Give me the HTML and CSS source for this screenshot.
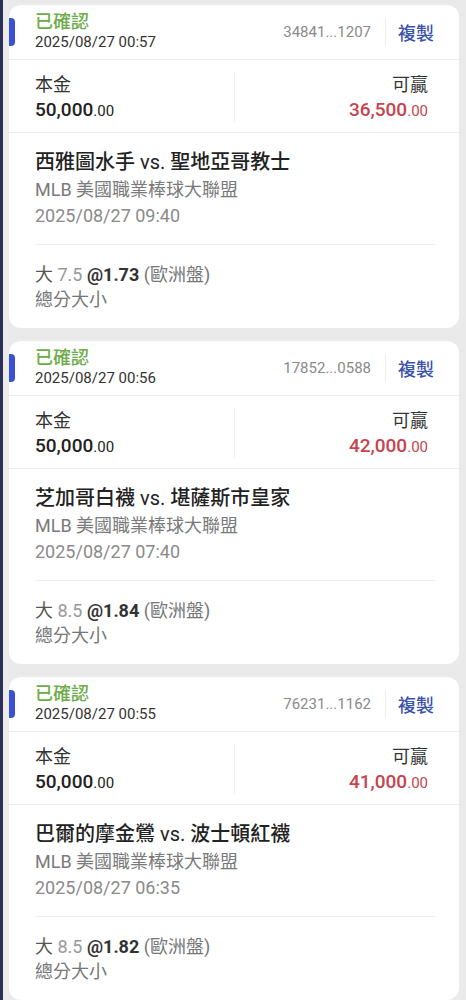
FILE: index.html
```html
<!DOCTYPE html>
<html lang="zh-Hant">
<head>
  <meta charset="UTF-8">
  <title>注單紀錄</title>
  <link rel="stylesheet" href="styles.css">
</head>
<body>
  <div class="page">

    <div class="card">
      <div class="card-head">
        <span class="marker"></span>
        <div class="status">
          <div class="status-text">已確認</div>
          <div class="status-time">2025/08/27 00:57</div>
        </div>
        <span class="order-no">34841...1207</span>
        <a class="copy">複製</a>
      </div>
      <div class="money">
        <div class="money-col">
          <div class="money-label">本金</div>
          <div class="amt">50,000<small>.00</small></div>
        </div>
        <div class="money-col right">
          <div class="money-label">可贏</div>
          <div class="amt win">36,500<small>.00</small></div>
        </div>
      </div>
      <div class="match">
        <div class="match-inner">
          <div class="teams">西雅圖水手 <span class="vs">vs.</span> 聖地亞哥教士</div>
          <div class="league">MLB 美國職業棒球大聯盟</div>
          <div class="kickoff">2025/08/27 09:40</div>
        </div>
      </div>
      <div class="bet">
        <div class="pick"><span class="side">大</span> <span class="line">7.5</span> <b>@1.73</b> <span class="type">(歐洲盤)</span></div>
        <div class="market">總分大小</div>
      </div>
    </div>

    <div class="card">
      <div class="card-head">
        <span class="marker"></span>
        <div class="status">
          <div class="status-text">已確認</div>
          <div class="status-time">2025/08/27 00:56</div>
        </div>
        <span class="order-no">17852...0588</span>
        <a class="copy">複製</a>
      </div>
      <div class="money">
        <div class="money-col">
          <div class="money-label">本金</div>
          <div class="amt">50,000<small>.00</small></div>
        </div>
        <div class="money-col right">
          <div class="money-label">可贏</div>
          <div class="amt win">42,000<small>.00</small></div>
        </div>
      </div>
      <div class="match">
        <div class="match-inner">
          <div class="teams">芝加哥白襪 <span class="vs">vs.</span> 堪薩斯市皇家</div>
          <div class="league">MLB 美國職業棒球大聯盟</div>
          <div class="kickoff">2025/08/27 07:40</div>
        </div>
      </div>
      <div class="bet">
        <div class="pick"><span class="side">大</span> <span class="line">8.5</span> <b>@1.84</b> <span class="type">(歐洲盤)</span></div>
        <div class="market">總分大小</div>
      </div>
    </div>

    <div class="card">
      <div class="card-head">
        <span class="marker"></span>
        <div class="status">
          <div class="status-text">已確認</div>
          <div class="status-time">2025/08/27 00:55</div>
        </div>
        <span class="order-no">76231...1162</span>
        <a class="copy">複製</a>
      </div>
      <div class="money">
        <div class="money-col">
          <div class="money-label">本金</div>
          <div class="amt">50,000<small>.00</small></div>
        </div>
        <div class="money-col right">
          <div class="money-label">可贏</div>
          <div class="amt win">41,000<small>.00</small></div>
        </div>
      </div>
      <div class="match">
        <div class="match-inner">
          <div class="teams">巴爾的摩金鶯 <span class="vs">vs.</span> 波士頓紅襪</div>
          <div class="league">MLB 美國職業棒球大聯盟</div>
          <div class="kickoff">2025/08/27 06:35</div>
        </div>
      </div>
      <div class="bet">
        <div class="pick"><span class="side">大</span> <span class="line">8.5</span> <b>@1.82</b> <span class="type">(歐洲盤)</span></div>
        <div class="market">總分大小</div>
      </div>
    </div>

  </div>
</body>
</html>
```

FILE: styles.css
```css
* {
  margin: 0;
  padding: 0;
  box-sizing: border-box;
  font-family: Roboto, 'Noto Sans CJK TC', sans-serif;
}

body {
  background: #eaeaeb;
  color: #333;
}

.page {
  min-height: 100vh;
  border-left: 3px solid #2a2e55;
  padding: 5px 7px 0 6px;
}

.card {
  background: #fff;
  border-radius: 12px;
  margin-bottom: 13px;
  overflow: hidden;
}

.card-head {
  display: flex;
  align-items: center;
  height: 55px;
  padding-right: 25px;
  border-bottom: 1px solid #efefef;
}

.marker {
  width: 6px;
  height: 28px;
  background: #3a50d9;
  border-radius: 0 4px 4px 0;
  margin-right: 20px;
}

.status {
  flex: 1;
}

.status-text {
  color: #6dab47;
  font-size: 18px;
  font-weight: 500;
  line-height: 21px;
}

.status-time {
  font-size: 15px;
  line-height: 21px;
  color: #333;
}

.order-no {
  font-size: 15px;
  color: #8a8a8a;
  padding-right: 14px;
  border-right: 1px solid #eee;
  line-height: 30px;
}

.copy {
  color: #3b53a8;
  font-size: 18px;
  font-weight: 500;
  margin-left: 12px;
}

.money {
  display: grid;
  grid-template-columns: 1fr 1fr;
  padding: 12px 0 10px;
  border-bottom: 1px solid #efefef;
}

.money-col {
  padding-left: 26px;
}

.money-col.right {
  text-align: right;
  padding: 0 31px 0 0;
  border-left: 1px solid #efefef;
}

.money-label {
  font-size: 18px;
  line-height: 25px;
  color: #333;
}

.amt {
  font-size: 19px;
  line-height: 25px;
  font-weight: 500;
  color: #222;
}

.amt small {
  font-size: 15px;
  font-weight: 400;
  line-height: 1;
}

.amt.win {
  color: #c8434d;
}

.match {
  padding: 14px 24px 0 26px;
}

.match-inner {
  padding-bottom: 15px;
  border-bottom: 1px solid #efefef;
}

.teams {
  font-size: 20px;
  line-height: 30px;
  font-weight: 500;
  color: #222;
}

.teams .vs {
  font-weight: 400;
}

.league, .kickoff {
  font-size: 18px;
  line-height: 26px;
  color: #7a7a7a;
}

.kickoff {
  color: #8a8a8a;
}

.bet {
  padding: 17px 26px 16px;
}

.pick, .market {
  font-size: 18px;
  line-height: 25px;
  color: #777;
}

.pick .side {
  color: #555;
}

.pick .line {
  color: #999;
}

.pick b {
  color: #333;
}
```
